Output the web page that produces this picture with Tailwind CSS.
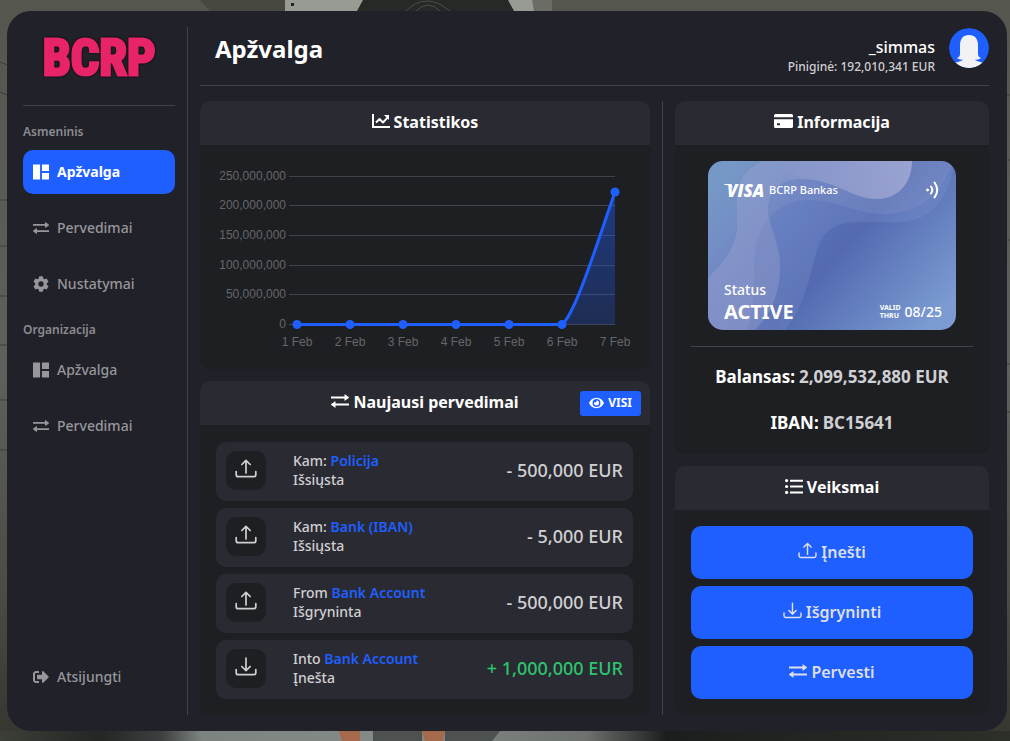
<!DOCTYPE html>
<html lang="lt">
<head>
<meta charset="utf-8">
<meta name="viewport" content="width=device-width, initial-scale=1">
<title>BCRP Bankas</title>
<script src="https://cdn.jsdelivr.net/npm/@tailwindcss/browser@4"></script>
</head>
<body class="relative isolate flex min-h-screen bg-[#4b4e4a] pt-[11px] pr-[3px] pb-[10px] pl-[7px] font-['Noto_Sans','Open_Sans',sans-serif] text-[#d0d0d3]">

<!-- Icon set -->
<svg class="hidden" aria-hidden="true">
  <symbol id="i-grid" viewBox="0 0 17 16"><path fill="currentColor" d="M0 0h7.500v16H0zM9.500 0H17v7H9.500zM9.500 9H17v7H9.500z"/></symbol>
  <symbol id="i-swap" viewBox="0 0 18 14"><path fill="currentColor" d="M0 2.500h13.500V0.800Q13.500 0 14.200 0.500L17.700 3Q18.300 3.500 17.700 4.100L14.200 6.600Q13.500 7 13.500 6.200V4.600H0zM18 11.500H4.500v1.700Q4.500 14 3.800 13.500L0.300 11Q-0.300 10.500 0.300 9.900L3.800 7.400Q4.500 7 4.500 7.800V9.400H18z"/></symbol>
  <symbol id="i-gear" viewBox="0 0 24 24"><path fill="currentColor" fill-rule="evenodd" d="M9.300 0.500h5.400l.7 3.300 1.900 1.100 3.200-1.100 2.700 4.700-2.500 2.300v2.400l2.500 2.300-2.700 4.700-3.200-1.100-1.900 1.100-.7 3.300H9.300l-.7-3.300-1.900-1.100-3.200 1.100L.8 15.500l2.500-2.300v-2.400L.8 8.500l2.700-4.700 3.200 1.100 1.900-1.100zM12 8a4 4 0 1 0 0 8 4 4 0 0 0 0-8z"/></symbol>
  <symbol id="i-exit" viewBox="0 0 512 512"><path fill="currentColor" d="M497 273 329 441c-15 15-41 4.500-41-17v-96H152c-13.300 0-24-10.700-24-24v-96c0-13.300 10.700-24 24-24h136V88c0-21.400 25.900-32 41-17l168 168c9.300 9.400 9.300 24.600 0 34zM192 436v-40c0-6.600-5.400-12-12-12H96c-17.700 0-32-14.300-32-32V160c0-17.700 14.300-32 32-32h84c6.600 0 12-5.400 12-12V76c0-6.600-5.400-12-12-12H96c-53 0-96 43-96 96v192c0 53 43 96 96 96h84c6.600 0 12-5.400 12-12z"/></symbol>
  <symbol id="i-chart" viewBox="0 0 18 14"><path fill="none" stroke="currentColor" stroke-width="2" d="M1 0v13h17"/><path fill="none" stroke="currentColor" stroke-width="1.900" stroke-linejoin="round" d="M4 8.500 7.500 5l3.500 3.500 4.500-4.800"/><path fill="currentColor" d="M12 1h5v5z"/></symbol>
  <symbol id="i-card" viewBox="0 0 19 14"><path fill="currentColor" fill-rule="evenodd" d="M1.500 0h16Q19 0 19 1.500V3.200H0V1.500Q0 0 1.500 0zM0 5.200h19v7.300q0 1.500-1.500 1.500h-16Q0 14 0 12.500zM3 9.200v2h3v-2z"/></symbol>
  <symbol id="i-list" viewBox="0 0 18 15"><g fill="currentColor"><circle cx="1.600" cy="1.600" r="1.600"/><circle cx="1.600" cy="7.500" r="1.600"/><circle cx="1.600" cy="13.400" r="1.600"/><path d="M5 .7h13v2H5zM5 6.500h13v2H5zM5 12.400h13v2H5z"/></g></symbol>
  <symbol id="i-up" viewBox="0 0 22 19"><g fill="none" stroke="currentColor" stroke-width="1.700" stroke-linecap="round" stroke-linejoin="round"><path d="M11 14V1.500M6.800 5.500 11 1.300l4.200 4.200"/><path d="M1.200 12.500v3.200q0 2 2 2h15.600q2 0 2-2v-3.200"/></g></symbol>
  <symbol id="i-down" viewBox="0 0 22 19"><g fill="none" stroke="currentColor" stroke-width="1.700" stroke-linecap="round" stroke-linejoin="round"><path d="M11 1v12.500M6.800 9.500 11 13.700l4.200-4.200"/><path d="M1.200 12.500v3.200q0 2 2 2h15.600q2 0 2-2v-3.200"/></g></symbol>
  <symbol id="i-eye" viewBox="0 0 16 12"><path fill="currentColor" fill-rule="evenodd" d="M8 .5C12 .5 14.700 3 16 6c-1.300 3-4 5.500-8 5.500S1.300 9 0 6C1.300 3 4 .5 8 .5zM8 1.800a4.200 4.200 0 1 0 0 8.400 4.200 4.200 0 0 0 0-8.400z"/><path fill="currentColor" d="M8 3.300a2.700 2.700 0 1 1-2.600 2q1.500.5 2.200-.3T8 3.300z"/></symbol>
</svg>

<!-- Street scene behind the panel -->
<svg class="absolute inset-0 -z-10 size-full" viewBox="0 0 1010 741" preserveAspectRatio="none" aria-hidden="true">
  <defs>
    <linearGradient id="wall" x2="0" y2="1"><stop offset="0" stop-color="#55564d"/><stop offset=".5" stop-color="#5d605c"/><stop offset=".8" stop-color="#4b4c43"/><stop offset="1" stop-color="#34362f"/></linearGradient>
    <linearGradient id="floor"><stop offset="0" stop-color="#3c3e38"/><stop offset=".1" stop-color="#242624"/><stop offset=".16" stop-color="#3c4040"/><stop offset=".2" stop-color="#7d8480"/><stop offset=".4" stop-color="#858b86"/><stop offset=".58" stop-color="#6d726e"/><stop offset=".66" stop-color="#1c1e1d"/><stop offset="1" stop-color="#2d2f29"/></linearGradient>
  </defs>
  <path fill="url(#wall)" d="M0 0h1010v741H0z"/>
  <path fill="#3e3f37" d="M200 0h85v11h-75z" opacity=".6"/>
  <path fill="#989a94" d="M285 0h264v11H285z"/>
  <path fill="#272927" d="M363 0h145l6 11H357z"/>
  <path fill="none" stroke="#4a4e4b" d="M406 11q20-20 44 0M416 11q12-12 24 0"/>
  <path fill="#6b6c66" d="M532 0h20v11h-18z"/>
  <path fill="#222" d="M291 3h3v3h-3z"/>
  <path fill="url(#floor)" d="M0 731h1010v10H0z"/>
  <path fill="#a5694b" d="M339 731h21v10h-18zM422 731h23l-2 10h-18z"/>
  <path fill="#4d5250" d="M373 731h49v10h-49zM445 731h55l-8 10h-47z"/>
  <path stroke="#3c3e39" d="M0 62l7 3M0 92l7 3M0 200h7M0 246h7M0 296h7M0 345h7M0 400h7M0 450h7M1006 95h4M1006 160h4M1006 240h4M1006 364h4M1006 412h4"/>
</svg>

<div class="flex min-w-0 flex-1 rounded-[24px] bg-[#212129] py-4 pr-[18px] pl-4">

  <!-- Sidebar -->
  <aside class="flex w-[165px] shrink-0 flex-col border-r border-[#42424c] pr-3">
    <div class="flex h-[62px] items-center justify-center font-['Liberation_Sans_Narrow','Roboto_Condensed','Liberation_Sans',sans-serif] text-[50px] leading-none font-bold text-[#e82468] drop-shadow-[0_0_1px_#000] [-webkit-text-stroke:3px_#e82468]">BCRP</div>
    <hr class="mt-4 border-[#42424c]">
    <h2 class="mt-4 text-xs leading-5 font-semibold text-[#8c8c90]">Asmeninis</h2>
    <nav class="mt-2 flex flex-col gap-3 text-sm font-medium text-[#97979b]">
      <a href="#" class="flex h-11 items-center gap-2 rounded-[10px] bg-[#1f5fff] px-2.5 font-bold text-white"><svg class="h-4 w-4"><use href="#i-grid"/></svg>Apžvalga</a>
      <a href="#" class="flex h-11 items-center gap-2 px-2.5"><svg class="h-3.5 w-4"><use href="#i-swap"/></svg>Pervedimai</a>
      <a href="#" class="flex h-11 items-center gap-2 px-2.5"><svg class="h-4 w-4"><use href="#i-gear"/></svg>Nustatymai</a>
    </nav>
    <h2 class="mt-3.5 text-xs leading-5 font-semibold text-[#8c8c90]">Organizacija</h2>
    <nav class="mt-2 flex flex-col gap-3 text-sm font-medium text-[#97979b]">
      <a href="#" class="flex h-11 items-center gap-2 px-2.5"><svg class="h-4 w-4"><use href="#i-grid"/></svg>Apžvalga</a>
      <a href="#" class="flex h-11 items-center gap-2 px-2.5"><svg class="h-3.5 w-4"><use href="#i-swap"/></svg>Pervedimai</a>
    </nav>
    <a href="#" class="mt-auto mb-4 flex h-11 items-center gap-2 px-2.5 text-sm font-medium text-[#97979b]"><svg class="h-4 w-4"><use href="#i-exit"/></svg>Atsijungti</a>
  </aside>

  <main class="ml-3 flex min-w-0 flex-1 flex-col">
    <header class="flex h-[59px] items-start justify-between border-b border-[#42424c] pl-[15px]">
      <h1 class="mt-1 text-2xl leading-9 font-bold text-white">Apžvalga</h1>
      <div class="flex gap-3.5">
        <div class="pt-2 text-right">
          <div class="text-base leading-6 font-medium text-white">_simmas</div>
          <div class="text-xs leading-4 font-medium">Piniginė: 192,010,341 EUR</div>
        </div>
        <svg class="mt-px size-10 rounded-full" viewBox="0 0 40 40" role="img" aria-label="_simmas"><circle cx="20" cy="20" r="20" fill="#1f5fff"/><path fill="#f2f2f4" d="M20 7c6 0 9 4 9 10v8c0 3 .5 4 3 5-2 1.500-4 2-6 1.500.5 1.500 4 2 7.500 3.300A20 20 0 0 1 6.500 34.800C10 33.500 13.500 33 14 31.500c-2 .5-4 0-6-1.500 2.500-1 3-2 3-5v-8c0-6 3-10 9-10z"/></svg>
      </div>
    </header>

    <div class="mt-[15px] flex flex-1">
      <!-- Left column -->
      <div class="flex min-w-0 flex-1 flex-col gap-3 border-r border-[#42424c] pr-3">
        <section class="overflow-hidden rounded-[10px] bg-[#1e1f23]">
          <h2 class="flex h-11 items-center justify-center gap-1 bg-[#2a2a32] pb-0.5 text-base font-bold text-white"><svg class="mb-0.5 h-3.5 w-[18px]"><use href="#i-chart"/></svg>Statistikos</h2>
          <div class="h-56">
            <svg class="size-full" viewBox="200 145 450 224" role="img" aria-label="Statistikos">
              <defs><linearGradient id="area" x2="0" y2="1"><stop offset="0" stop-color="#1f5fff" stop-opacity=".42"/><stop offset="1" stop-color="#1f5fff" stop-opacity=".22"/></linearGradient></defs>
              <path stroke="#42424d" shape-rendering="crispEdges" d="M289 176.500h326M289 205.500h326M289 235.500h326M289 265.500h326M289 294.500h326M289 324.500h326"/>
              <path fill="url(#area)" d="M562 324.500C576 313 598 240 615 192v132.500z"/>
              <path fill="none" stroke="#1f5fff" stroke-width="3" d="M297 324.500h265C576 313 598 240 615 192"/>
              <g fill="#1f5fff"><circle cx="297" cy="324.500" r="4.500"/><circle cx="350" cy="324.500" r="4.500"/><circle cx="403" cy="324.500" r="4.500"/><circle cx="456" cy="324.500" r="4.500"/><circle cx="509" cy="324.500" r="4.500"/><circle cx="562" cy="324.500" r="4.500"/><circle cx="615" cy="192" r="4.500"/></g>
              <g class="fill-[#66666a] font-['Liberation_Sans',Arial,sans-serif] text-xs">
                <g text-anchor="end"><text x="286" y="180">250,000,000</text><text x="286" y="209">200,000,000</text><text x="286" y="239">150,000,000</text><text x="286" y="269">100,000,000</text><text x="286" y="298">50,000,000</text><text x="286" y="328">0</text></g>
                <g text-anchor="middle"><text x="297" y="346">1 Feb</text><text x="350" y="346">2 Feb</text><text x="403" y="346">3 Feb</text><text x="456" y="346">4 Feb</text><text x="509" y="346">5 Feb</text><text x="562" y="346">6 Feb</text><text x="615" y="346">7 Feb</text></g>
              </g>
            </svg>
          </div>
        </section>

        <section class="flex-1 overflow-hidden rounded-[10px] bg-[#1e1f23]">
          <div class="relative flex h-11 items-center justify-center bg-[#2a2a32]">
            <h2 class="flex items-center gap-1 pb-0.5 text-base font-bold text-white"><svg class="mb-0.5 h-3.5 w-[18px]"><use href="#i-swap"/></svg>Naujausi pervedimai</h2>
            <button type="button" class="absolute right-[9px] flex h-[25px] items-center gap-1 rounded-[3px] bg-[#1f5fff] px-[9px] text-xs font-bold text-white"><svg class="h-3 w-[15px]"><use href="#i-eye"/></svg>VISI</button>
          </div>
          <ul class="flex flex-col gap-[7px] pt-[17px] pr-[17px] pb-4 pl-4 text-sm leading-[19px] font-medium">
            <li class="flex h-[59px] items-center rounded-[10px] bg-[#2a2a32] px-2.5 pb-[3px]"><span class="flex h-[39px] w-10 items-center justify-center rounded-[10px] bg-[#1e1f23] pb-1"><svg class="h-[19px] w-[22px]"><use href="#i-up"/></svg></span><div class="ml-[27px] flex-1">Kam: <a href="#" class="font-semibold text-[#1f5fff]">Policija</a><br>Išsiųsta</div><span class="text-lg">- 500,000 EUR</span></li>
            <li class="flex h-[59px] items-center rounded-[10px] bg-[#2a2a32] px-2.5 pb-[3px]"><span class="flex h-[39px] w-10 items-center justify-center rounded-[10px] bg-[#1e1f23] pb-1"><svg class="h-[19px] w-[22px]"><use href="#i-up"/></svg></span><div class="ml-[27px] flex-1">Kam: <a href="#" class="font-semibold text-[#1f5fff]">Bank (IBAN)</a><br>Išsiųsta</div><span class="text-lg">- 5,000 EUR</span></li>
            <li class="flex h-[59px] items-center rounded-[10px] bg-[#2a2a32] px-2.5 pb-[3px]"><span class="flex h-[39px] w-10 items-center justify-center rounded-[10px] bg-[#1e1f23] pb-1"><svg class="h-[19px] w-[22px]"><use href="#i-up"/></svg></span><div class="ml-[27px] flex-1">From <a href="#" class="font-semibold text-[#1f5fff]">Bank Account</a><br>Išgryninta</div><span class="text-lg">- 500,000 EUR</span></li>
            <li class="flex h-[59px] items-center rounded-[10px] bg-[#2a2a32] px-2.5 pb-[3px]"><span class="flex h-[39px] w-10 items-center justify-center rounded-[10px] bg-[#1e1f23] pb-1"><svg class="h-[19px] w-[22px]"><use href="#i-down"/></svg></span><div class="ml-[27px] flex-1">Into <a href="#" class="font-semibold text-[#1f5fff]">Bank Account</a><br>Įnešta</div><span class="text-lg text-[#2dc46f]">+ 1,000,000 EUR</span></li>
          </ul>
        </section>
      </div>

      <!-- Right column -->
      <div class="ml-3 flex w-[314px] shrink-0 flex-col gap-3">
        <section class="flex-1 overflow-hidden rounded-[10px] bg-[#1e1f23]">
          <h2 class="flex h-11 items-center justify-center gap-1 bg-[#2a2a32] pb-0.5 text-base font-bold text-white"><svg class="mb-0.5 h-3.5 w-[19px]"><use href="#i-card"/></svg>Informacija</h2>
          <div class="px-4 pt-4">
            <div class="relative isolate mx-auto flex h-[169px] w-[248px] flex-col justify-between overflow-hidden rounded-[15px] px-4 pt-5 pb-1.5 text-white">
              <svg class="absolute inset-0 -z-10 size-full" viewBox="0 0 248 169" preserveAspectRatio="none" aria-hidden="true">
                <defs><linearGradient id="cb" x1="0" y1=".2" x2="1" y2=".8"><stop offset="0" stop-color="#6590bd"/><stop offset=".25" stop-color="#5f78ba"/><stop offset=".54" stop-color="#536ab0"/><stop offset="1" stop-color="#7b9bd2"/></linearGradient>
                <linearGradient id="cw"><stop offset="0" stop-color="#c9c9e6" stop-opacity="0"/><stop offset="1" stop-color="#c9c9e6" stop-opacity=".38"/></linearGradient></defs>
                <path fill="url(#cb)" d="M0 0h248v169H0z"/>
                <path fill="#8aa4dc" opacity=".2" d="M0 0h246c-3 30-18 61-56 61h-42c-26 0-34 14-39 28-9 32-12 55-32 80H0z"/>
                <path fill="#a5b0d8" opacity=".16" d="M38 169c8-12 8-40 8-68 0-34 22-62 54-62 30 0 48 14 76 14 44 0 60-30 70-53H0v169z"/>
                <path fill="#a5a8d0" opacity=".34" d="M55 0C22 15 30 40 29 66 28 92 8 107 0 118v51h47c18-18 25-40 25-62 0-28-12-42-12-58 0-22 16-31 33-31 34 0 50 20 76 20 21 0 35-16 35-38z"/>
                <path fill="url(#cw)" d="M204 0c0 22-14 38-35 38-26 0-42-20-76-20L70 0z"/>
              </svg>
              <div class="flex items-center gap-1">
                <svg class="h-[13px] w-[41px] overflow-visible" viewBox="0 0 41 13" aria-label="VISA"><path fill="#fff" d="M0 0h5q2.500 0 3 2l1 2Q6 1 0 .8z"/><text x="3" y="13" class="fill-white font-['Open_Sans',sans-serif] text-[17px] font-extrabold italic">VISA</text></svg>
                <span class="text-[11px] leading-[18px] font-medium">BCRP Bankas</span>
                <svg class="ml-auto h-[18px] w-4" viewBox="0 0 16 18" fill="none" stroke="#fff" stroke-width="2" stroke-linecap="round" aria-hidden="true"><circle cx="3.500" cy="9" r="1" fill="#fff" stroke-width="1"/><path d="M7 5.500q2.600 3.500 0 7M10.500 1.500q5.500 7.500 0 15"/></svg>
              </div>
              <div class="flex items-end justify-between">
                <div><div class="text-sm leading-5 font-medium">Status</div><div class="text-xl leading-6 font-bold">ACTIVE</div></div>
                <div class="-mr-0.5 flex items-center gap-1"><span class="text-[7px] leading-2 font-bold">VALID<br>THRU</span><span class="text-sm leading-6 font-medium">08/25</span></div>
              </div>
            </div>
            <hr class="mt-4 border-[#42424c]">
            <dl class="flex flex-col items-center gap-[22px] pt-[18px] pb-4 text-[17px] leading-6 font-bold">
              <div class="flex gap-1"><dt class="text-white">Balansas:</dt><dd>2,099,532,880 EUR</dd></div>
              <div class="flex gap-1"><dt class="text-white">IBAN:</dt><dd>BC15641</dd></div>
            </dl>
          </div>
        </section>

        <section class="overflow-hidden rounded-[10px] bg-[#1e1f23]">
          <h2 class="flex h-11 items-center justify-center gap-1 bg-[#2a2a32] pb-0.5 text-base font-bold text-white"><svg class="mb-0.5 h-[15px] w-[18px]"><use href="#i-list"/></svg>Veiksmai</h2>
          <div class="flex flex-col gap-[7px] p-4 text-base font-semibold text-[#dddfe6]">
            <button type="button" class="flex h-[53px] items-center justify-center gap-1 rounded-[10px] bg-[#1f5fff] pb-0.5"><svg class="mb-0.5 h-[17px] w-[19px]"><use href="#i-up"/></svg>Įnešti</button>
            <button type="button" class="flex h-[53px] items-center justify-center gap-1 rounded-[10px] bg-[#1f5fff] pb-0.5"><svg class="mb-0.5 h-[17px] w-[19px]"><use href="#i-down"/></svg>Išgryninti</button>
            <button type="button" class="flex h-[53px] items-center justify-center gap-1 rounded-[10px] bg-[#1f5fff] pb-0.5"><svg class="mb-0.5 h-3.5 w-[18px]"><use href="#i-swap"/></svg>Pervesti</button>
          </div>
        </section>
      </div>
    </div>
  </main>
</div>
</body>
</html>
